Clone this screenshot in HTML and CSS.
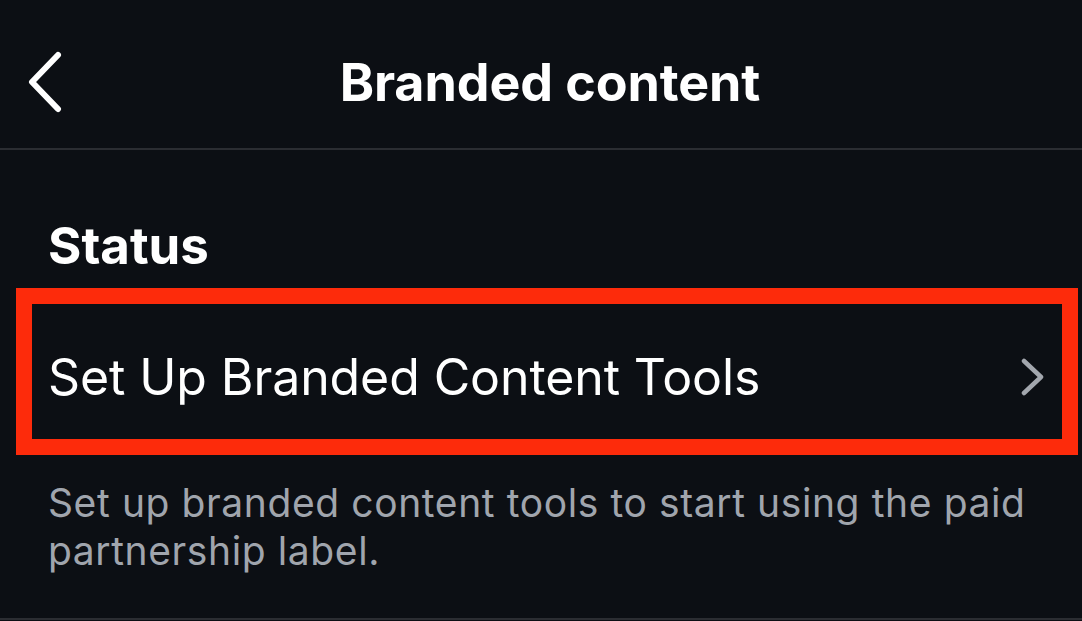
FILE: index.html
```html
<!DOCTYPE html>
<html lang="en">
  <head>
    <meta charset="UTF-8" />
    <meta name="viewport" content="width=device-width, initial-scale=1.0" />
    <title>Branded content</title>
    <link rel="stylesheet" href="styles.css">
  </head>
  <body>
    <header class="topbar">
      <button type="button" class="back" aria-label="Back">
        <svg width="40" height="62" viewBox="0 0 40 62">
          <path d="M34 4 L8 31 L34 58" fill="none" stroke="#fff" stroke-width="6" stroke-linecap="round" stroke-linejoin="round" />
        </svg>
      </button>
      <h1 class="title">Branded content</h1>
    </header>

    <section class="status">
      <h2 class="status_head">Status</h2>
      <div class="row_box">
        <div class="row">
          <span class="row_label">Set Up Branded Content Tools</span>
          <svg class="chev" width="26" height="38" viewBox="0 0 26 38">
            <path d="M4 3 L21 19 L4 35" fill="none" stroke="#a3a7ae" stroke-width="4.5" stroke-linecap="round" stroke-linejoin="round" />
          </svg>
        </div>
      </div>
      <p class="note">Set up branded content tools to start using the paid partnership label.</p>
    </section>
  </body>
</html>
```

FILE: styles.css
```css
* {
  box-sizing: border-box;
  padding: 0;
  margin: 0;
  font-family: Inter, "Liberation Sans", sans-serif;
}
body {
  height: 100vh;
  background-color: #0c0f14;
  color: #fff;
  overflow: hidden;
}
.topbar {
  height: 150px;
  display: flex;
  align-items: center;
  justify-content: center;
  position: relative;
  border-bottom: 2px solid #2b2d32;
}
.back {
  position: absolute;
  left: 24px;
  top: 51px;
  background: none;
  border: none;
  display: block;
}
.title {
  font-size: 52px;
  font-weight: 700;
  margin-top: 16px;
  margin-left: 18px;
  letter-spacing: -0.1px;
}
.status {
  padding: 66px 0 0;
  border-bottom: 2px solid #2b2d32;
  height: 470px;
}
.status_head {
  font-size: 51px;
  font-weight: 700;
  padding-left: 48px;
  line-height: 60px;
}
.row_box {
  margin: 12px 4px 0 16px;
  border: 16px solid #fd2b0b;
  height: 167px;
}
.row {
  height: 100%;
  display: flex;
  align-items: center;
  justify-content: space-between;
  padding: 10px 16px 0 16px;
}
.row_label {
  font-size: 50px;
  font-weight: 400;
  letter-spacing: -0.1px;
}
.chev {
  display: block;
}
.note {
  color: #a0a5ad;
  font-size: 39px;
  letter-spacing: 0.6px;
  line-height: 48px;
  padding: 24px 20px 0 48px;
}
```
